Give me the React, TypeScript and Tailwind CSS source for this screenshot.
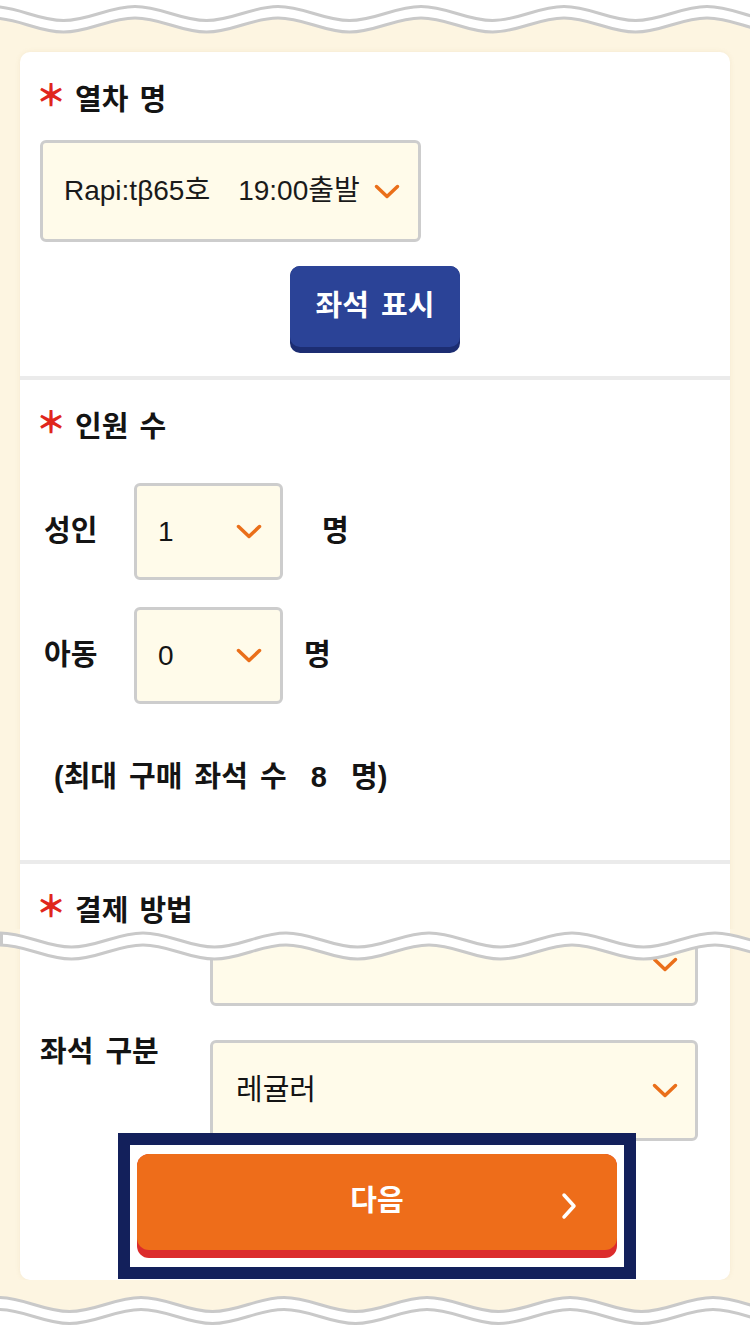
import React from "react";

const WL = 143;
const HW = WL / 2;

function wavePts(y: number, amp: number, phase: number) {
  let x = phase;
  while (x > -200) x -= WL;
  const startX = x;
  let d = `M ${x.toFixed(2)} ${(y - amp).toFixed(2)}`;
  let up = true;
  while (x < 950) {
    const ya = up ? y - amp : y + amp;
    const yb = up ? y + amp : y - amp;
    d += ` C ${(x + 0.3642 * HW).toFixed(2)} ${ya.toFixed(2)} ${(x + 0.6358 * HW).toFixed(2)} ${yb.toFixed(2)} ${(x + HW).toFixed(2)} ${yb.toFixed(2)}`;
    x += HW;
    up = !up;
  }
  return { d, startX, endX: x };
}

const GRAY = "#c9c9c9";
const CREAM = "#fdf5e1";

function TopWave() {
  const up = wavePts(13.5, 7, -8);
  const lo = wavePts(25, 7, -8);
  const below = `${lo.d} L ${lo.endX} 40 L ${lo.startX} 40 Z`;
  return (
    <svg width="750" height="40" viewBox="0 0 750 40" className="block">
      <rect x="0" y="0" width="750" height="40" fill="#ffffff" />
      <path d={below} fill={CREAM} />
      <path d={up.d} fill="none" stroke={GRAY} strokeWidth="3" />
      <path d={lo.d} fill="none" stroke={GRAY} strokeWidth="3" />
    </svg>
  );
}

function BottomWave() {
  const up = wavePts(24.5, 7, -2);
  const lo = wavePts(36.5, 7, -2);
  const above = `${up.d} L ${up.endX} 0 L ${up.startX} 0 Z`;
  return (
    <svg width="750" height="54" viewBox="0 0 750 54" className="block">
      <rect x="0" y="0" width="750" height="54" fill="#ffffff" />
      <path d={above} fill={CREAM} />
      <path d={up.d} fill="none" stroke={GRAY} strokeWidth="3" />
      <path d={lo.d} fill="none" stroke={GRAY} strokeWidth="3" />
    </svg>
  );
}

function MiddleWave() {
  const up = wavePts(11, 7, 0);
  const lo = wavePts(23, 7, 0);
  const aboveUp = `${up.d} L ${up.endX} 0 L ${up.startX} 0 Z`;
  const aboveLo = `${lo.d} L ${lo.endX} 0 L ${lo.startX} 0 Z`;
  return (
    <svg width="750" height="40" viewBox="0 0 750 40" className="block">
      <defs>
        <clipPath id="midAbove">
          <path d={aboveUp} />
        </clipPath>
      </defs>
      <path d={aboveLo} fill="#ffffff" />
      <g clipPath="url(#midAbove)">
        <rect x="0" y="0" width="750" height="40" fill={CREAM} />
        <rect x="20" y="0" width="710" height="40" fill="#ffffff" />
      </g>
      <path d={up.d} fill="none" stroke={GRAY} strokeWidth="3" />
      <path d={lo.d} fill="none" stroke={GRAY} strokeWidth="3" />
      <line x1="1.5" y1="4" x2="1.5" y2="16" stroke={GRAY} strokeWidth="3" />
    </svg>
  );
}

function Chevron() {
  return (
    <svg width="26" height="15" viewBox="0 0 26 15" className="block shrink-0">
      <polyline
        points="2.5,2.5 13,12.5 23.5,2.5"
        fill="none"
        stroke="#ea6f1a"
        strokeWidth="3.5"
        strokeLinecap="round"
        strokeLinejoin="round"
      />
    </svg>
  );
}

function Heading({ children }: { children: React.ReactNode }) {
  return (
    <div className="flex h-10 items-center pl-[16px]">
      <span className="mb-[8px] w-[39px] text-[30px] font-black leading-none text-[#e0261c]">＊</span>
      <span className="text-[29px] font-bold leading-none text-[#141414] [word-spacing:3px]">{children}</span>
    </div>
  );
}

function Divider() {
  return <div className="h-[4px] w-full bg-[#ebebeb]" />;
}

export default function App() {
  return (
    <div className="relative w-[750px] bg-white font-['Liberation_Sans','Noto_Sans_CJK_KR',sans-serif] text-[#141414]">
      <TopWave />
      <div className="bg-[#fdf5e1] px-5 pt-3">
        <div className="rounded-[10px] bg-white shadow-[0_0_5px_rgba(180,150,90,0.12)]">
          {/* Section 1 */}
          <div className="pt-[28px] pb-[23px]">
            <Heading>열차 명</Heading>
            <div className="mt-5 pl-5">
              <div className="flex h-[102px] w-[381px] items-center justify-between rounded-[6px] border-[3px] border-[#cdcdcd] bg-[#fffbea] pl-[21px] pr-[18px]">
                <span className="text-[28px] leading-none text-[#1a1a1a]">Rapi:tβ65호　19:00출발</span>
                <Chevron />
              </div>
            </div>
            <div className="mt-6 flex justify-center">
              <div className="h-[87px] w-[170px] rounded-[10px] bg-[#1c2d72]">
                <div className="flex h-[81px] items-center justify-center rounded-[10px] bg-[#2b4397]">
                  <span className="text-[29px] font-bold leading-none text-white [word-spacing:4px]">좌석 표시</span>
                </div>
              </div>
            </div>
          </div>
          <Divider />
          {/* Section 2 */}
          <div className="pt-[27px] pb-[63px]">
            <Heading>인원 수</Heading>
            <div className="mt-[36px] flex items-center">
              <span className="w-[114px] pl-[24px] text-[29px] font-bold leading-none">성인</span>
              <div className="flex h-[97px] w-[149px] items-center justify-between rounded-[6px] border-[3px] border-[#cdcdcd] bg-[#fffbea] pl-[21px] pr-[18px]">
                <span className="text-[28px] leading-none">1</span>
                <Chevron />
              </div>
              <span className="ml-[39px] text-[29px] font-bold leading-none">명</span>
            </div>
            <div className="mt-[27px] flex items-center">
              <span className="w-[114px] pl-[24px] text-[29px] font-bold leading-none">아동</span>
              <div className="flex h-[97px] w-[149px] items-center justify-between rounded-[6px] border-[3px] border-[#cdcdcd] bg-[#fffbea] pl-[21px] pr-[18px]">
                <span className="text-[28px] leading-none">0</span>
                <Chevron />
              </div>
              <span className="ml-[21px] text-[29px] font-bold leading-none">명</span>
            </div>
            <div className="mt-[53px] flex h-10 items-center pl-[34px]">
              <span className="whitespace-pre text-[29px] font-bold leading-none [word-spacing:4px]">(최대 구매 좌석 수  8  명)</span>
            </div>
          </div>
          <Divider />
          {/* Section 3 */}
          <div className="pt-[27px] pb-[1px]">
            <Heading>결제 방법</Heading>
            <div className="mt-[4px] pl-[190px]">
              <div className="flex h-[71px] w-[488px] items-start justify-end rounded-b-[6px] border-[3px] border-[#cdcdcd] bg-[#fffbea] pt-[19px] pr-[17px]">
                <Chevron />
              </div>
            </div>
            <div className="mt-[34px] flex items-start">
              <span className="-mt-[4px] w-[190px] pl-[20px] text-[29px] font-bold leading-[32px] [word-spacing:4px]">좌석 구분</span>
              <div className="flex h-[101px] w-[488px] items-center justify-between rounded-[6px] border-[3px] border-[#cdcdcd] bg-[#fffbea] pl-[23px] pr-[17px]">
                <span className="text-[29px] leading-none">레귤러</span>
                <Chevron />
              </div>
            </div>
            <div className="relative z-10 -mt-[8px] ml-[98px] w-[518px] border-[12px] border-[#13205b] bg-white px-[7px] py-[9px]">
              <div className="h-[104px] w-[480px] rounded-[12px] bg-[#dc2c2c]">
                <div className="grid h-[96px] grid-cols-[1fr_auto_1fr] items-center rounded-[12px] bg-[#ee6d1a]">
                  <div />
                  <span className="mb-[2px] text-[29px] font-bold leading-none text-white">다음</span>
                  <div className="flex justify-end pr-[40px]">
                    <svg width="16" height="28" viewBox="0 0 16 28" className="mt-[8px] block">
                      <polyline
                        points="3,3 13,14 3,25"
                        fill="none"
                        stroke="#ffffff"
                        strokeWidth="3.5"
                        strokeLinecap="round"
                        strokeLinejoin="round"
                      />
                    </svg>
                  </div>
                </div>
              </div>
            </div>
          </div>
        </div>
      </div>
      <BottomWave />
      <div className="absolute left-0 top-[929px]">
        <MiddleWave />
      </div>
    </div>
  );
}
